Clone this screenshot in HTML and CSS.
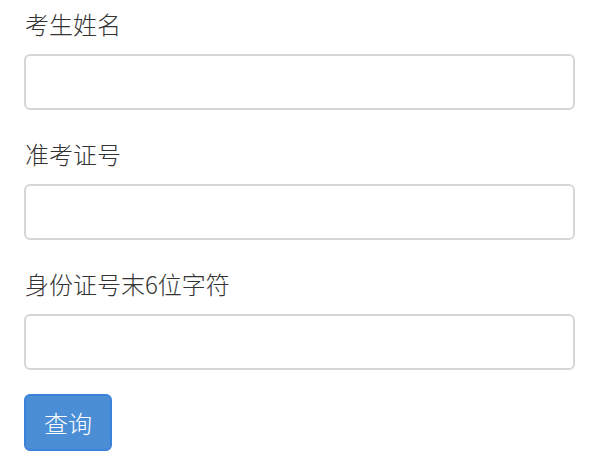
FILE: index.html
```html
<!DOCTYPE html>
<html lang="zh-CN">
<head>
    <meta charset="UTF-8">
    <meta name="viewport" content="width=device-width, initial-scale=1.0">
    <title>成绩查询</title>
    <link rel="stylesheet" href="styles.css">
</head>
<body>
    <form class="query-form">
        <div class="form-group">
            <label for="name">考生姓名</label>
            <input type="text" id="name">
        </div>
        <div class="form-group">
            <label for="ticket">准考证号</label>
            <input type="text" id="ticket">
        </div>
        <div class="form-group">
            <label for="idcard">身份证号末6位字符</label>
            <input type="text" id="idcard">
        </div>
        <button type="button" class="btn-query">查询</button>
    </form>
</body>
</html>
```

FILE: styles.css
```css
body {
    margin: 0;
    padding: 0;
    background: #ffffff;
    font-family: "Noto Sans CJK SC", "Liberation Sans", sans-serif;
    color: #333333;
}

.query-form {
    padding: 7px 30px 0 24px;
}

.form-group {
    margin-bottom: 27px;
}

.form-group:last-of-type {
    margin-bottom: 24px;
}

label {
    display: block;
    font-size: 24px;
    font-weight: 300;
    line-height: 34px;
    height: 34px;
    padding-left: 1px;
    margin-bottom: 13px;
}

input[type="text"] {
    display: block;
    box-sizing: border-box;
    width: 100%;
    height: 56px;
    border: 2px solid #d6d6d6;
    border-radius: 6px;
    background: #ffffff;
}

.btn-query {
    box-sizing: border-box;
    width: 88px;
    height: 57px;
    padding: 0;
    background-color: #4b8ed6;
    border: 2px solid #3a82d9;
    border-radius: 6px;
    color: #ffffff;
    font-family: "Noto Sans CJK SC", sans-serif;
    font-size: 24px;
    font-weight: 300;
    cursor: pointer;
}
```
